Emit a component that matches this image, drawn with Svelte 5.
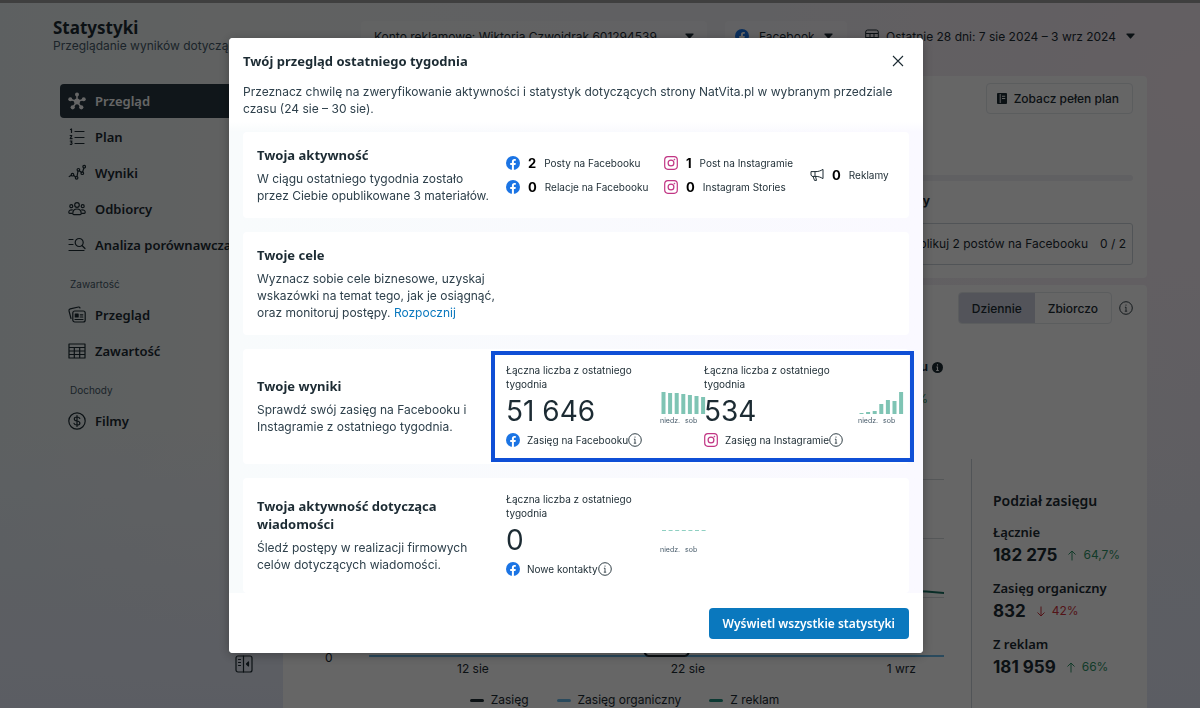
<script lang="ts">
	type Metric = { icon: string; value: string; label: string; bars: number[] };

	const navGroups = [
		{
			title: '',
			items: [
				{ label: 'Przegląd', icon: 'hub' },
				{ label: 'Plan', icon: 'list' },
				{ label: 'Wyniki', icon: 'trend' },
				{ label: 'Odbiorcy', icon: 'people' },
				{ label: 'Analiza porównawcza', icon: 'search' }
			]
		},
		{
			title: 'Zawartość',
			items: [
				{ label: 'Przegląd', icon: 'cards' },
				{ label: 'Zawartość', icon: 'table' }
			]
		},
		{ title: 'Dochody', items: [{ label: 'Filmy', icon: 'dollar' }] }
	];

	const activity = [
		[
			{ icon: 'facebook', value: 2, label: 'Posty na Facebooku' },
			{ icon: 'facebook', value: 0, label: 'Relacje na Facebooku' }
		],
		[
			{ icon: 'instagram', value: 1, label: 'Post na Instagramie' },
			{ icon: 'instagram', value: 0, label: 'Instagram Stories' }
		],
		[{ icon: 'megaphone', value: 0, label: 'Reklamy' }]
	];

	const results: Metric[] = [
		{ icon: 'facebook', value: '51 646', label: 'Zasięg na Facebooku', bars: [22, 21, 21, 20, 19, 18, 17] },
		{ icon: 'instagram', value: '534', label: 'Zasięg na Instagramie', bars: [1, 2, 3, 10, 14, 13, 22] }
	];

	const messages: Metric[] = [
		{ icon: 'facebook', value: '0', label: 'Nowe kontakty', bars: [] }
	];

	const breakdown = [
		{ label: 'Łącznie', value: '182 275', change: '64,7%', up: true },
		{ label: 'Zasięg organiczny', value: '832', change: '42%', up: false },
		{ label: 'Z reklam', value: '181 959', change: '66%', up: true }
	];

	const legend = [
		{ label: 'Zasięg', color: '#1c2b33' },
		{ label: 'Zasięg organiczny', color: '#6ab8e8' },
		{ label: 'Z reklam', color: '#1f9080' }
	];

	let mode = $state('daily');
</script>

{#snippet icon(name: string)}
	{#if name === 'facebook'}
		<svg class="icon brand" viewBox="0 0 14 14" aria-hidden="true">
			<circle cx="7" cy="7" r="7" fill="#1b74e4" />
			<path d="M5.9 14V9.1H4.2V7.1h1.7V5.7c0-1.9.9-2.8 2.6-2.8.5 0 1 .1 1.3.2v1.7H8.9c-.8 0-1 .4-1 1v1.3h1.9l-.3 2H7.9V14z" fill="#fff" />
		</svg>
	{:else if name === 'instagram'}
		<svg class="icon brand" viewBox="0 0 14 14" fill="none" stroke="#c13584" stroke-width="1.2" aria-hidden="true">
			<rect x=".7" y=".7" width="12.6" height="12.6" rx="3.2" />
			<circle cx="7" cy="7" r="2.9" />
			<circle cx="10.4" cy="3.6" r=".5" fill="#c13584" stroke-width=".6" />
		</svg>
	{:else if name === 'megaphone'}
		<svg class="icon brand" viewBox="0 0 14 14" fill="none" stroke="currentColor" stroke-linejoin="round" aria-hidden="true">
			<path d="M1 3.600h5c2.500 0 4.500-.8 7-2.200v9.200c-2.500-1.400-4.500-2.200-7-2.200H2L1 7zM5 3.600v4.800M3 8.400l1.500 4h2L5.500 8.400" />
		</svg>
	{:else if name === 'info'}
		<svg class="icon brand" viewBox="0 0 14 14" fill="none" stroke="currentColor" aria-hidden="true">
			<circle cx="7" cy="7" r="6.300" stroke-width=".9" />
			<path d="M7 6v4.200M5.900 6.200H7M5.800 10.200h2.400" stroke-width=".8" />
			<circle cx="7" cy="4" r=".6" fill="currentColor" stroke="none" />
		</svg>
	{:else if name === 'caret'}
		<svg class="caret" viewBox="0 0 9 6" aria-hidden="true">
			<path d="M1 .5h7q1 0 .4.900L5.100 5.300q-.6.700-1.200 0L.6 1.400Q0 .5 1 .5z" fill="currentColor" />
		</svg>
	{:else}
		<svg class="icon nav-icon" viewBox="0 0 18 18" fill="none" stroke="currentColor" stroke-width="1.200" stroke-linecap="round" stroke-linejoin="round" aria-hidden="true">
			{#if name === 'hub'}
				<path d="M9 9.500V3M9 9.500 2.500 7.500M9 9.500l6.500-2M9 9.500l-4 5.500M9 9.500l4 5.500" stroke-width="1.500" />
				<g fill="currentColor" stroke="none">
					<circle cx="9" cy="9.500" r="3" />
					<circle cx="9" cy="2.400" r="2" />
					<circle cx="2.300" cy="7.300" r="2" />
					<circle cx="15.700" cy="7.300" r="2" />
					<circle cx="4.700" cy="15.300" r="2.100" />
					<circle cx="13.300" cy="15.300" r="2.100" />
				</g>
			{:else if name === 'list'}
				<path d="M7 3.500h9M7 9.500h9M7 15.500h9M2.500 1.500l1-.5v3.500M2.200 7.500h1.600l-1.600 3.200h1.900M2.300 13h1.700l-.9 1.300q1.200.3.800 1.500-.6.900-1.600.4" />
			{:else if name === 'trend'}
				<path d="m1.200 12.500 2.300-1.300M5.700 11.500l2 1.400M9 12.600l1-5.600M11.600 6.900l2 1.500M14.600 8l1.300-4" />
				<circle cx="4.500" cy="10.700" r="1.300" />
				<circle cx="8.600" cy="13.800" r="1.300" />
				<circle cx="10.400" cy="5.800" r="1.300" />
				<circle cx="14.300" cy="9.200" r="1.300" />
				<circle cx="16.200" cy="2.700" r="1.300" />
			{:else if name === 'people'}
				<circle cx="9" cy="5" r="2.300" />
				<circle cx="3.300" cy="6.200" r="1.500" />
				<circle cx="14.700" cy="6.200" r="1.500" />
				<path d="M4.800 13.500c0-3 1.500-4.500 4.200-4.500s4.200 1.500 4.200 4.500q0 1.200-1 1.200H5.800q-1 0-1-1.200zM4.300 9.800Q.8 9.700.8 12.300q0 1 .8 1h2.200M13.700 9.800q3.500-.1 3.500 2.500 0 1-.8 1h-2.200" />
			{:else if name === 'search'}
				<path d="M1 3.500h4M1 8.500h4M1 14.500h15M14 9.500l3 3" />
				<circle cx="11.200" cy="6.500" r="4" />
			{:else if name === 'cards'}
				<rect x="4.800" y="5" width="12.400" height="11" rx="2" />
				<path d="M3 12.500 1 4.800q-.3-1.600 1.200-2L10.500 1q1.200-.1 1.500 1M12.300 8.800h2.500M12.300 11h2.500M7 13.500h8" />
				<rect x="7.300" y="8" width="2.800" height="3" fill="currentColor" />
			{:else if name === 'table'}
				<path d="M1 2h16v14H1zM1 5.500h16M1 9h16M1 12.500h16M6.300 5.500V16M11.700 5.500V16" />
			{:else if name === 'dollar'}
				<circle cx="9" cy="9" r="8.200" />
				<path d="M9 3.500v11M11.800 6.500Q11.300 5 9 5 6.300 5 6.300 6.900 6.300 8.600 9 9q2.900.4 2.900 2.200Q11.900 13 9 13q-2.500 0-3-1.700" />
			{:else if name === 'collapse'}
				<rect x="1" y="1" width="16" height="16" rx="2" />
				<path d="M8.500 1v16M3.500 4.500h2M3.500 7.500h2M3.500 10.500h2" />
				<path d="M13.500 7v4L11.500 9z" fill="currentColor" />
			{/if}
		</svg>
	{/if}
{/snippet}

{#snippet metricCard(metric: Metric)}
	<div class="metric">
		<div class="metric-main">
			<p class="metric-caption">Łączna liczba z ostatniego tygodnia</p>
			<p class="metric-value">{metric.value}</p>
			<div class="metric-label">
				{@render icon(metric.icon)}
				<span>{metric.label}</span>
				<button class="bare" aria-label="Informacje: {metric.label}">{@render icon('info')}</button>
			</div>
		</div>
		<div class="mini-chart">
			<svg viewBox="0 0 46 24" aria-hidden="true">
				{#if metric.bars.length}
					{#each metric.bars as height, i}
						<rect x={1.5 + i * 6.6} y={23 - height} width="4" {height} fill="#7fc4b4" />
					{/each}
				{:else}
					<path d="M2 10.500h44" stroke="#8fd0c2" stroke-dasharray="4 2.600" />
				{/if}
			</svg>
			<div class="mini-axis"><span>niedz.</span><span>sob</span></div>
		</div>
	</div>
{/snippet}

<div class="page">
	<header class="page-header">
		<div class="heading">
			<h1>Statystyki</h1>
			<p>Przeglądanie wyników dotyczących</p>
		</div>
		<div class="filters">
			<label class="picker account">
				<select aria-label="Konto reklamowe">
					<option>Konto reklamowe: Wiktoria Czwojdrak 601294539</option>
				</select>
				{@render icon('caret')}
			</label>
			<label class="picker platform">
				{@render icon('facebook')}
				<select aria-label="Platforma"><option>Facebook</option></select>
				{@render icon('caret')}
			</label>
			<button class="date-range">
				<svg class="icon brand" viewBox="0 0 14 14" fill="none" stroke="currentColor" aria-hidden="true">
					<rect x=".7" y="1" width="12.600" height="12.300" rx="2" />
					<path d="M1 4.500h12M5 4.500v9M9 4.500v9M1 8.500h12" />
				</svg>
				<span>Ostatnie 28 dni: 7 sie 2024 – 3 wrz 2024</span>
				{@render icon('caret')}
			</button>
		</div>
	</header>

	<div class="columns">
		<nav class="sidebar" aria-label="Statystyki">
			{#each navGroups as group, g}
				{#if group.title}
					<h2>{group.title}</h2>
				{/if}
				<ul>
					{#each group.items as item, i}
						<li>
							<a href="#{item.icon}" class:active={g === 0 && i === 0}>
								{@render icon(item.icon)}
								{item.label}
							</a>
						</li>
					{/each}
				</ul>
			{/each}
			<button class="bare collapse" aria-label="Zwiń menu">{@render icon('collapse')}</button>
		</nav>

		<main>
			<section class="panel plan">
				<button class="outline">
					<svg class="plan-icon" viewBox="0 0 11 12" aria-hidden="true">
						<path d="M1 0h9q1 0 1 1v10q0 1-1 1H1q-1 0-1-1V1q0-1 1-1zM3 1v10h1V1zM5.500 3v1H9V3zM5.500 5.500v1H9v-1z" fill="currentColor" fill-rule="evenodd" />
					</svg>
					Zobacz pełen plan
				</button>
				<div class="progress"></div>
				<div class="plan-tabs"><strong>Posty</strong></div>
				<div class="goal">
					<span>Opublikuj 2 postów na Facebooku</span>
					<span>0 / 2</span>
				</div>
			</section>

			<section class="panel reach">
				<div class="reach-tools">
					<div class="toggle">
						<button class:selected={mode === 'daily'} onclick={() => (mode = 'daily')}>Dziennie</button>
						<button class:selected={mode === 'total'} onclick={() => (mode = 'total')}>Zbiorczo</button>
					</div>
					<button class="bare" aria-label="Informacje">{@render icon('info')}</button>
				</div>
				<div class="reach-metric">
					<strong>
						Zasięg na Facebooku
						<svg class="info-solid" viewBox="0 0 10 10" aria-hidden="true">
							<circle cx="5" cy="5" r="5" fill="#1c2b33" />
							<path d="M5 4.200v3.500M4 4.500h1M3.800 7.700h2.400M5 2v1.200" stroke="#fff" />
						</svg>
					</strong>
					<span class="up">64,7%</span>
				</div>
				<div class="reach-body">
					<div class="chart">
						<div class="plot">
							<span class="zero">0</span>
							<svg viewBox="0 0 576 204" preserveAspectRatio="none" aria-hidden="true">
								<path d="M0 20.500h576M0 79.500h576M0 138.500h576" stroke="#d5d9dd" />
								<path d="M540 132q18 0 36 2" fill="none" stroke="#187062" stroke-width="2" />
								<path d="M0 197h576" stroke="#6ab8e8" stroke-width="2" />
								<path d="M274 188q2 9 6 9h36q4 0 6-9" fill="none" stroke="#1c2b33" stroke-width="2" />
							</svg>
						</div>
						<div class="days"><span>12 sie</span><span>22 sie</span><span>1 wrz</span></div>
						<ul class="legend">
							{#each legend as entry}
								<li><i style="background: {entry.color}"></i>{entry.label}</li>
							{/each}
						</ul>
					</div>
					<aside class="breakdown">
						<h2>Podział zasięgu</h2>
						{#each breakdown as row}
							<h3>{row.label}</h3>
							<p>
								<strong>{row.value}</strong>
								<svg class="arrow" class:up={row.up} class:down={!row.up} viewBox="0 0 10 11" fill="none" stroke="currentColor" aria-hidden="true">
									{#if row.up}
										<path d="M5 10.500V1M1.500 4.500 5 1l3.500 3.500" />
									{:else}
										<path d="M5 .5V10M1.500 6.500 5 10l3.500-3.500" />
									{/if}
								</svg>
								<span class:up={row.up} class:down={!row.up}>{row.change}</span>
							</p>
						{/each}
					</aside>
				</div>
			</section>
		</main>
	</div>
</div>

<div class="backdrop">
	<div class="modal" role="dialog" aria-modal="true" aria-labelledby="modal-title">
		<div class="modal-head">
			<h2 id="modal-title">Twój przegląd ostatniego tygodnia</h2>
			<button class="bare close" aria-label="Zamknij">
				<svg viewBox="0 0 12 12" fill="none" stroke="currentColor" stroke-width="1.100" aria-hidden="true">
					<path d="m1 1 10 10M11 1 1 11" />
				</svg>
			</button>
		</div>
		<p class="intro">
			Przeznacz chwilę na zweryfikowanie aktywności i statystyk dotyczących strony NatVita.pl w
			wybranym przedziale czasu (24 sie – 30 sie).
		</p>

		<div class="cards">
			<section class="card">
				<div class="card-text">
					<h3>Twoja aktywność</h3>
					<p>W ciągu ostatniego tygodnia zostało przez Ciebie opublikowane 3 materiałów.</p>
				</div>
				<div class="activity">
					{#each activity as column}
						<ul>
							{#each column as item}
								<li>
									{@render icon(item.icon)}
									<strong>{item.value}</strong>
									<span>{item.label}</span>
								</li>
							{/each}
						</ul>
					{/each}
				</div>
			</section>

			<section class="card">
				<div class="card-text">
					<h3>Twoje cele</h3>
					<p>
						Wyznacz sobie cele biznesowe, uzyskaj wskazówki na temat tego, jak je osiągnąć, oraz
						monitoruj postępy. <a href="#cele">Rozpocznij</a>
					</p>
				</div>
			</section>

			<section class="card">
				<div class="card-text">
					<h3>Twoje wyniki</h3>
					<p>Sprawdź swój zasięg na Facebooku i Instagramie z ostatniego tygodnia.</p>
				</div>
				<div class="metrics highlighted">
					{#each results as metric}
						{@render metricCard(metric)}
					{/each}
				</div>
			</section>

			<section class="card">
				<div class="card-text">
					<h3>Twoja aktywność dotycząca wiadomości</h3>
					<p>Śledź postępy w realizacji firmowych celów dotyczących wiadomości.</p>
				</div>
				<div class="metrics">
					{#each messages as metric}
						{@render metricCard(metric)}
					{/each}
				</div>
			</section>
		</div>

		<div class="modal-foot">
			<button class="primary">Wyświetl wszystkie statystyki</button>
		</div>
	</div>
</div>

<style>
	:global(body) {
		margin: 0;
		overflow: hidden;
	}

	h1,
	h2,
	h3,
	p,
	ul {
		margin: 0;
		padding: 0;
		list-style: none;
	}

	button,
	select {
		font: inherit;
		color: inherit;
	}

	.page,
	.backdrop {
		font-family: Inter, 'Liberation Sans', sans-serif;
		font-size: 12px;
		color: #1c2b33;
	}

	h1,
	h2,
	h3,
	.sidebar a,
	.primary {
		font-family: 'Noto Sans', 'Open Sans', sans-serif;
		font-weight: 600;
	}

	.icon {
		flex: none;
		display: block;
	}

	.brand {
		width: 14px;
		height: 14px;
	}

	.nav-icon {
		width: 18px;
		height: 18px;
	}

	.caret {
		flex: none;
		width: 9px;
		height: 6px;
		pointer-events: none;
	}

	.bare {
		padding: 0;
		border: 0;
		background: none;
		cursor: pointer;
	}

	.page {
		display: flex;
		flex-direction: column;
		box-sizing: border-box;
		height: 100vh;
		overflow: hidden;
		border-top: 3px solid #9e9e9e;
		background:
			radial-gradient(circle at 100% 12%, #faeef4 0, transparent 36%),
			linear-gradient(180deg, transparent 60%, #e4e9f8 100%),
			linear-gradient(90deg, #e9f1f3 0, #f0f3f3 20%, #f0eff6 80%, #ebebf5 100%);
	}

	.page-header {
		display: flex;
		justify-content: space-between;
		align-items: flex-start;
		box-sizing: border-box;
		height: 73px;
		padding: 15px 53px 0;
		white-space: nowrap;
	}

	.heading h1 {
		font-size: 17px;
		font-weight: 700;
		line-height: 20px;
	}

	.heading p {
		line-height: 16px;
		color: #465a69;
	}

	.filters {
		display: flex;
		gap: 18px;
		padding: 3px 12px 0 15px;
	}

	.picker,
	.date-range {
		display: flex;
		align-items: center;
		height: 30px;
	}

	.picker {
		box-sizing: border-box;
		border-radius: 4px;
		background: rgba(255, 255, 255, 0.4);
	}

	.picker select {
		flex: 1;
		min-width: 0;
		padding: 0;
		border: 0;
		background: none;
		appearance: none;
	}

	.account {
		width: 346px;
		padding: 0 13px;
	}

	.platform {
		width: 122px;
		gap: 10px;
		padding: 0 14px 0 10px;
	}

	.date-range {
		gap: 7px;
		padding: 0;
		border: 0;
		background: none;
	}

	.date-range .caret {
		margin-left: 3px;
	}

	.columns {
		display: flex;
		flex: 1;
		min-height: 0;
	}

	.sidebar {
		display: flex;
		flex-direction: column;
		flex: none;
		box-sizing: border-box;
		width: 283px;
		padding: 8px 30px 35px 60px;
	}

	.sidebar ul {
		display: flex;
		flex-direction: column;
		gap: 2px;
	}

	.sidebar a {
		display: flex;
		align-items: center;
		gap: 9px;
		height: 34px;
		padding: 0 8px;
		border-radius: 4px;
		font-size: 13px;
		color: inherit;
		text-decoration: none;
		white-space: nowrap;
	}

	.sidebar a.active {
		background: #283943;
		color: #fff;
	}

	.sidebar h2 {
		margin: 14px 0 6px 10px;
		font-family: Inter, sans-serif;
		font-size: 10px;
		font-weight: 400;
		line-height: 16px;
		color: #465a69;
	}

	.collapse {
		align-self: flex-end;
		margin-top: auto;
	}

	main {
		display: flex;
		flex-direction: column;
		flex: 1;
		gap: 7px;
		min-width: 0;
		padding-right: 53px;
	}

	.panel {
		padding: 7px 14px 13px;
		border-radius: 4px;
		background: #fff;
	}

	.plan {
		display: flex;
		flex: none;
		flex-direction: column;
	}

	.outline {
		display: flex;
		align-items: center;
		align-self: flex-end;
		gap: 7px;
		height: 31px;
		padding: 0 13px 0 10px;
		border: 1px solid #e4e8ec;
		border-radius: 4px;
		background: none;
		font-weight: 500;
	}

	.plan-icon {
		width: 10px;
		height: 11px;
	}

	.progress {
		height: 6px;
		margin-top: 61px;
		border-radius: 3px;
		background: #f0f0f5;
	}

	.plan-tabs {
		margin: 11px 0 13px;
		text-align: right;
		padding-right: 203px;
		line-height: 18px;
	}

	.goal {
		display: flex;
		align-items: center;
		justify-content: flex-end;
		gap: 12px;
		padding: 12px 6px;
		border: 1px solid #cbd2d9;
		border-radius: 3px;
		line-height: 16px;
	}

	.reach {
		display: flex;
		flex: none;
		flex-direction: column;
	}

	.reach-tools {
		display: flex;
		align-items: center;
		justify-content: flex-end;
		gap: 7px;
	}

	.toggle {
		display: flex;
		overflow: hidden;
		border: 1px solid #e4e8ec;
		border-radius: 4px;
	}

	.toggle button {
		height: 30px;
		padding: 0 13px;
		border: 0;
		background: none;
		font-weight: 500;
	}

	.toggle .selected {
		background: #cfd3e0;
	}

	.reach-metric {
		display: flex;
		flex-direction: column;
		align-items: flex-end;
		gap: 16px;
		margin-top: 35px;
		padding-right: 190px;
		line-height: 16px;
	}

	.reach-metric strong {
		display: flex;
		align-items: center;
		gap: 4px;
	}

	.reach-metric span {
		padding-right: 15px;
	}

	.info-solid {
		width: 11px;
		height: 11px;
	}

	.reach-body {
		display: flex;
		margin-top: 52px;
	}

	.chart {
		flex: 1;
		min-width: 0;
		padding: 0 27px 0 28px;
	}

	.plot {
		display: flex;
		align-items: flex-end;
		gap: 36px;
	}

	.zero {
		line-height: 10px;
	}

	.plot svg {
		flex: 1;
		min-width: 0;
		height: 204px;
	}

	.days {
		display: flex;
		justify-content: space-between;
		padding: 0 28px 0 132px;
		line-height: 12px;
	}

	.legend {
		display: flex;
		justify-content: center;
		gap: 28px;
		margin-top: 16px;
		padding-right: 20px;
		line-height: 18px;
	}

	.legend li {
		display: flex;
		align-items: center;
		gap: 7px;
	}

	.legend i {
		width: 14px;
		height: 3px;
		border-radius: 2px;
	}

	.breakdown {
		width: 140px;
		padding: 32px 0 30px 21px;
		border-left: 1px solid #cbd2d9;
	}

	.breakdown h2 {
		margin-bottom: 11px;
		font-size: 14px;
		line-height: 20px;
		white-space: nowrap;
	}

	.breakdown h3 {
		font-size: 13px;
		line-height: 20px;
		white-space: nowrap;
	}

	.breakdown p {
		display: flex;
		align-items: center;
		margin-bottom: 10px;
		line-height: 26px;
		white-space: nowrap;
	}

	.breakdown strong {
		margin-right: 10px;
		font-size: 17px;
		font-weight: 700;
	}

	.arrow {
		flex: none;
		width: 10px;
		height: 11px;
		margin-right: 6px;
	}

	.up {
		color: #2f9468;
	}

	.down {
		color: #d0343e;
	}

	.backdrop {
		position: fixed;
		inset: 0;
		display: flex;
		align-items: center;
		justify-content: center;
		padding: 0 48px 18px 0;
		background: rgba(0, 0, 0, 0.6);
	}

	.modal {
		width: 694px;
		max-width: 100%;
		overflow: hidden;
		border-radius: 4px;
		background: linear-gradient(90deg, #f8fbfc, #faf9ff);
		box-shadow: 0 2px 12px rgba(0, 0, 0, 0.3);
	}

	.modal-head {
		display: flex;
		align-items: center;
		justify-content: space-between;
		padding: 14px 19px 13px 14px;
		background: #fff;
	}

	.modal-head h2 {
		font-size: 13px;
		font-weight: 700;
		line-height: 18px;
	}

	.close {
		display: flex;
	}

	.close svg {
		width: 12px;
		height: 12px;
	}

	.intro {
		padding: 0 14px 15px;
		background: linear-gradient(#fff 80%, transparent);
		line-height: 17px;
		color: #2f414c;
	}

	.cards {
		display: flex;
		flex-direction: column;
		gap: 14px;
		padding: 0 14px;
	}

	.card {
		display: flex;
		align-items: center;
		gap: 9px;
		padding: 14px;
		border-radius: 4px;
		background: #fff;
	}

	.card-text {
		flex: none;
		width: 240px;
	}

	.card-text h3 {
		margin-bottom: 6px;
		font-size: 13px;
		font-weight: 700;
		line-height: 18px;
	}

	.card-text p {
		line-height: 17px;
		color: #2f414c;
	}

	.card-text a {
		color: #0a78be;
		text-decoration: none;
	}

	.activity {
		display: grid;
		grid-template-columns: 158px 146px auto;
		align-items: center;
		white-space: nowrap;
	}

	.activity ul {
		display: flex;
		flex-direction: column;
		gap: 8px;
	}

	.activity li {
		display: flex;
		align-items: center;
		gap: 8px;
		font-size: 10px;
		line-height: 16px;
	}

	.activity strong {
		font-size: 13px;
		color: #000;
	}

	.metrics {
		position: relative;
		display: flex;
	}

	.highlighted::after {
		content: '';
		position: absolute;
		inset: -12px -12px -12px -15px;
		border: 4px solid #0f4fd6;
		pointer-events: none;
	}

	.metric {
		display: flex;
		width: 198px;
	}

	.metric-main {
		flex: none;
		width: 154px;
	}

	.metric-caption {
		width: 144px;
		font-size: 10px;
		line-height: 14px;
	}

	.metric-value {
		font-size: 28px;
		line-height: 40px;
		white-space: nowrap;
	}

	.metric-label {
		display: flex;
		align-items: center;
		height: 19px;
		font-size: 10px;
		white-space: nowrap;
	}

	.metric-label span {
		margin-left: 7px;
	}

	.mini-chart {
		flex: none;
		width: 46px;
		margin-top: 28px;
	}

	.mini-chart svg {
		display: block;
		width: 46px;
		height: 24px;
	}

	.mini-axis {
		display: flex;
		gap: 5px;
		font-size: 7px;
		line-height: 12px;
		color: #465a69;
	}

	.modal-foot {
		display: flex;
		justify-content: flex-end;
		padding: 15px 14px 14px;
		background: #fff;
	}

	.primary {
		height: 31px;
		padding: 0 14px;
		border: 0;
		border-radius: 4px;
		background: #0a78be;
		font-size: 12px;
		color: #fff;
		cursor: pointer;
	}
</style>
